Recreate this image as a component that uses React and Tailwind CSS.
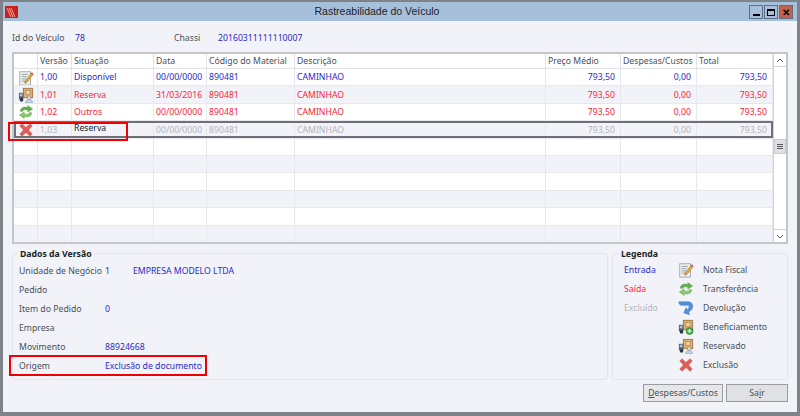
import React from "react";

const BLUE = "text-[#2d2ac4]";
const RED = "text-[#fb2438]";
const GRAY = "text-[#b4b4b8]";

const widths = ["w-[24px]", "w-[34px]", "w-[82px]", "w-[53px]", "w-[88px]", "w-[251px]", "w-[75px]", "w-[76px]", "w-[76px]"];

const NotaIcon = () => (
  <svg width="16" height="16" viewBox="0 0 18 18">
    <rect x="2" y="2" width="12" height="15" fill="#f1f1ee" stroke="#9aa3ad" />
    <path d="M4 5h7M4 7.500h6M4 10h5M4 12.500h5" stroke="#8d96a3" strokeWidth="1" />
    <path d="M8 12.500 14.500 4l2 1.600L10 14l-2.500.8z" fill="#e8b23c" stroke="#8a5a20" strokeWidth=".6" />
    <path d="M14.500 4l1-1.400 2 1.600-1 1.400z" fill="#d4483a" />
  </svg>
);

const TransfIcon = () => (
  <svg width="16" height="16" viewBox="0 0 18 18">
    <path d="M2.500 8C3 4.500 6.500 2.500 11 4V1.800L16.500 5.600 11 9V6.800C8 6 6 6.500 5 8.500z" fill="#62b04a" stroke="#4b9a3a" strokeWidth=".5" />
    <path d="M15.500 10C15 13.500 11.500 15.500 7 14v2.200L1.500 12.400 7 9v2.200c3 .8 5 .3 6-1.700z" fill="#8ccb6c" stroke="#4b9a3a" strokeWidth=".5" />
  </svg>
);

const DevolIcon = () => (
  <svg width="16" height="16" viewBox="0 0 18 18">
    <path d="M1 2h10c4.500 0 6 3 5.500 6-.4 2.500-2.500 4.500-4.500 5.500l1 3-6.500-2 2.500-6 1 2.500c1.500-.8 2.500-2 2.500-3.500S11.500 6 10 6H4C2.500 6 1 5 1 2z" fill="#4f8fdc" stroke="#2f6db8" strokeWidth=".5" />
  </svg>
);

const TruckBase = () => (
  <>
    <rect x="6" y="1.500" width="10.500" height="10.500" fill="#dcae70" stroke="#9c7440" />
    <rect x="9" y="4" width="4.500" height="4.500" fill="#f2d7a8" stroke="#9c7440" strokeWidth=".6" />
    <path d="M1 6.500h5V14H1z" fill="#55606c" />
    <rect x="2" y="7.500" width="3" height="3" fill="#a8c4de" />
    <circle cx="4" cy="14.500" r="2" fill="#2f3740" />
  </>
);

const BenefIcon = () => (
  <svg width="16" height="16" viewBox="0 0 18 18">
    <TruckBase />
    <circle cx="13" cy="13.500" r="4" fill="#3fa648" stroke="#2c7d36" strokeWidth=".6" />
    <path d="M13 11.200v4.600M10.700 13.500h4.600" stroke="#fff" strokeWidth="1.400" />
  </svg>
);

const ReservIcon = () => (
  <svg width="16" height="16" viewBox="0 0 18 18">
    <TruckBase />
    <circle cx="12.500" cy="12" r="2" fill="#e9e2c8" stroke="#6f7f92" strokeWidth=".6" />
    <path d="M8.500 17.500c.5-3 2-3.500 4-3.500s3.500.5 4 3.500z" fill="#c4d4e6" stroke="#6f7f92" strokeWidth=".5" />
  </svg>
);

const XIcon = () => (
  <svg width="16" height="16" viewBox="0 0 18 18">
    <path d="M2 4.500 4.500 2 9 6.200 13.500 2 16 4.500 11.800 9 16 13.500 13.500 16 9 11.800 4.500 16 2 13.500 6.200 9z" fill="#dd5f55" stroke="#c04a42" strokeWidth=".6" />
  </svg>
);

const rows = [
  { icon: <NotaIcon />, color: BLUE, v: "1,00", sit: "Disponível", data: "00/00/0000" },
  { icon: <ReservIcon />, color: RED, v: "1,01", sit: "Reserva", data: "31/03/2016", alt: true },
  { icon: <TransfIcon />, color: RED, v: "1,02", sit: "Outros", data: "00/00/0000" },
  { icon: <XIcon />, color: GRAY, v: "1,03", sit: "Reserva", data: "00/00/0000", alt: true, selected: true },
];

const headers = ["", "Versão", "Situação", "Data", "Código do Material", "Descrição", "Preço Médio", "Despesas/Custos", "Total"];

const Row = ({ row }) => {
  const cell = "shrink-0 h-full flex items-center px-[2px] pt-[1px] border-r border-[#e6e8ee] whitespace-nowrap overflow-hidden";
  const values = [row.v, row.sit, row.data, "890481", "CAMINHAO"];
  return (
    <div className={`relative flex h-[17.4px] shrink-0 border-b border-[#e6e8ee] ${row.alt ? "bg-[#f1f3f8]" : "bg-white"} ${row.color}`}>
      <div className={`${widths[0]} ${cell} justify-center`}>{row.icon}</div>
      {values.map((v, i) => (
        <div key={i} className={`${widths[i + 1]} ${cell}`}>
          {row.selected && i === 1 ? <span className="text-[#20242c] -mt-[3px]">{v}</span> : v}
        </div>
      ))}
      {["793,50", "0,00", "793,50"].map((v, i) => (
        <div key={i} className={`${widths[i + 6]} ${cell} justify-end pr-[5px]`}>{v}</div>
      ))}
      {row.selected && <div className="absolute inset-0 border-2 border-[#6f7177]" />}
    </div>
  );
};

const EmptyRow = ({ alt }) => (
  <div className={`flex h-[17.4px] shrink-0 border-b border-[#e6e8ee] ${alt ? "bg-[#f1f3f8]" : "bg-white"}`}>
    {widths.map((w, i) => (
      <div key={i} className={`${w} shrink-0 border-r border-[#e6e8ee]`} />
    ))}
  </div>
);

const Field = ({ label, children }) => (
  <div className="flex items-center h-[18.9px] whitespace-nowrap">
    <div className="w-[86px] shrink-0 text-[#4a4f58]">{label}</div>
    {children}
  </div>
);

const legend = [
  ["Entrada", BLUE, <NotaIcon />, "Nota Fiscal"],
  ["Saída", RED, <TransfIcon />, "Transferência"],
  ["Excluído", GRAY, <DevolIcon />, "Devolução"],
  ["", "", <BenefIcon />, "Beneficiamento"],
  ["", "", <ReservIcon />, "Reservado"],
  ["", "", <XIcon />, "Exclusão"],
];

const WinButton = ({ bg, children }) => (
  <div className={`w-[14px] h-[14px] flex items-center justify-center border border-[#5f6e82] ${bg}`}>{children}</div>
);

export default function App() {
  return (
    <div className="relative w-[800px] h-[416px] overflow-hidden flex flex-col bg-[#f1f3f9] border-x-[3px] border-t-[2px] border-b-[4px] border-[#7d8389] text-[8.7px] leading-none text-[#4a4f58]" style={{ fontFamily: "'Noto Sans', sans-serif" }}>
      {/* Title bar */}
      <div className="relative flex items-center justify-center h-[19px] shrink-0 bg-[#a6bfda] pr-[46px]">
        <div className="absolute left-[2px] top-[4px] w-[13px] h-[12px] bg-[#c8201c] flex items-center justify-center">
          <svg width="11" height="11" viewBox="0 0 11 11">
            <path d="M1 1l4 9M3 1l4 9M5 1l4 9" stroke="#f3b7a8" strokeWidth=".9" />
          </svg>
        </div>
        <div className="text-[10.5px] text-[#20242c]" style={{ fontFamily: "'Liberation Sans', sans-serif" }}>Rastreabilidade do Veículo</div>
        <div className="absolute right-[4px] top-[3px] flex gap-[1px]">
          <WinButton bg="bg-[#a6bfda]"><div className="w-[7px] h-[2px] mt-[5px] bg-black" /></WinButton>
          <WinButton bg="bg-[#a6bfda]"><div className="w-[8px] h-[7px] border border-t-2 border-black" /></WinButton>
          <WinButton bg="bg-[#c8604a]"><span className="text-[10px] font-bold text-black">✕</span></WinButton>
        </div>
      </div>

      {/* Vehicle info */}
      <div className="flex items-center h-[31px] shrink-0 pl-[9px] pt-[3px]">
        <div className="w-[63px]">Id do Veículo</div>
        <div className={`w-[99px] ${BLUE}`}>78</div>
        <div className="w-[44px]">Chassi</div>
        <div className={BLUE}>20160311111110007</div>
      </div>

      {/* Grid */}
      <div className="flex h-[192px] shrink-0 mx-[9px] border-2 border-[#c4c6ca] bg-white">
        <div className="flex flex-col w-[759px] shrink-0 overflow-hidden">
          <div className="flex h-[15px] shrink-0 bg-white border-b border-[#dfe2e8]">
            {headers.map((h, i) => (
              <div key={i} className={`${widths[i]} shrink-0 flex items-center px-[2px] pt-[1px] border-r border-[#dfe2e8] whitespace-nowrap overflow-hidden`}>{h}</div>
            ))}
          </div>
          {rows.map((row, i) => (
            <Row key={i} row={row} />
          ))}
          {[0, 1, 2, 3, 4, 5].map((i) => (
            <EmptyRow key={i} alt={i % 2 === 1} />
          ))}
        </div>
        {/* Scrollbar */}
        <div className="flex flex-col flex-1 border-l border-[#d0d3d8] bg-white">
          <div className="h-[13px] flex items-center justify-center border-b border-[#d0d3d8]">
            <svg width="8" height="5" viewBox="0 0 8 5"><path d="M1 4l3-3 3 3" fill="none" stroke="#555" /></svg>
          </div>
          <div className="flex-1 bg-white pt-[72px]">
            <div className="h-[15px] bg-[#dfe1e5] border border-[#c8cbd0] flex flex-col items-center justify-center gap-[1px]">
              <div className="w-[6px] h-px bg-[#555]" />
              <div className="w-[6px] h-px bg-[#555]" />
              <div className="w-[6px] h-px bg-[#555]" />
            </div>
          </div>
          <div className="h-[13px] flex items-center justify-center border-t border-[#d0d3d8]">
            <svg width="8" height="5" viewBox="0 0 8 5"><path d="M1 1l3 3 3-3" fill="none" stroke="#555" /></svg>
          </div>
        </div>
      </div>

      {/* Bottom panels */}
      <div className="flex gap-[4px] mx-[9px] mt-[9px] shrink-0">
        <div className="relative w-[596px] h-[127px] border border-[#e2e5ec] rounded-[3px] pl-[6px] pt-[8px]">
          <div className="absolute left-[5px] -top-[4px] px-[2px] bg-[#f1f3f9] font-bold text-[#1c1f26]">Dados da Versão</div>
          <Field label="Unidade de Negócio">
            <span className={`w-[28px] ${BLUE}`}>1</span>
            <span className={BLUE}>EMPRESA MODELO LTDA</span>
          </Field>
          <Field label="Pedido" />
          <Field label="Item do Pedido"><span className={BLUE}>0</span></Field>
          <Field label="Empresa" />
          <Field label="Movimento"><span className={BLUE}>88924668</span></Field>
          <Field label="Origem"><span className={BLUE}>Exclusão de documento</span></Field>
        </div>
        <div className="relative flex-1 h-[127px] border border-[#e2e5ec] rounded-[3px] pt-[7px] pl-[11px]">
          <div className="absolute left-[6px] -top-[4px] px-[2px] bg-[#f1f3f9] font-bold text-[#1c1f26]">Legenda</div>
          {legend.map(([lbl, color, icon, name], i) => (
            <div key={i} className="flex items-center h-[18.9px]">
              <div className={`w-[52px] ${color}`}>{lbl}</div>
              <div className="w-[20px] flex justify-center">{icon}</div>
              <div className="ml-[7px]">{name}</div>
            </div>
          ))}
        </div>
      </div>

      {/* Buttons */}
      <div className="flex justify-end gap-[3px] mr-[9px] mt-[4px]">
        <button className="w-[80px] h-[18px] bg-[#e6e7ea] border border-[#9a9ca0] text-[#4a4f58]"><span className="underline">D</span>espesas/Custos</button>
        <button className="w-[62px] h-[18px] bg-[#e0e1e4] border border-[#9a9ca0] text-[#4a4f58]">Sa<span className="underline">i</span>r</button>
      </div>

      {/* Red annotation boxes */}
      <div className="absolute left-[5px] top-[120px] w-[120px] h-[19px] border-[2.5px] border-[#f00000]" />
      <div className="absolute left-[6px] top-[353px] w-[198px] h-[21px] border-[2.5px] border-[#f00000]" />
    </div>
  );
}
